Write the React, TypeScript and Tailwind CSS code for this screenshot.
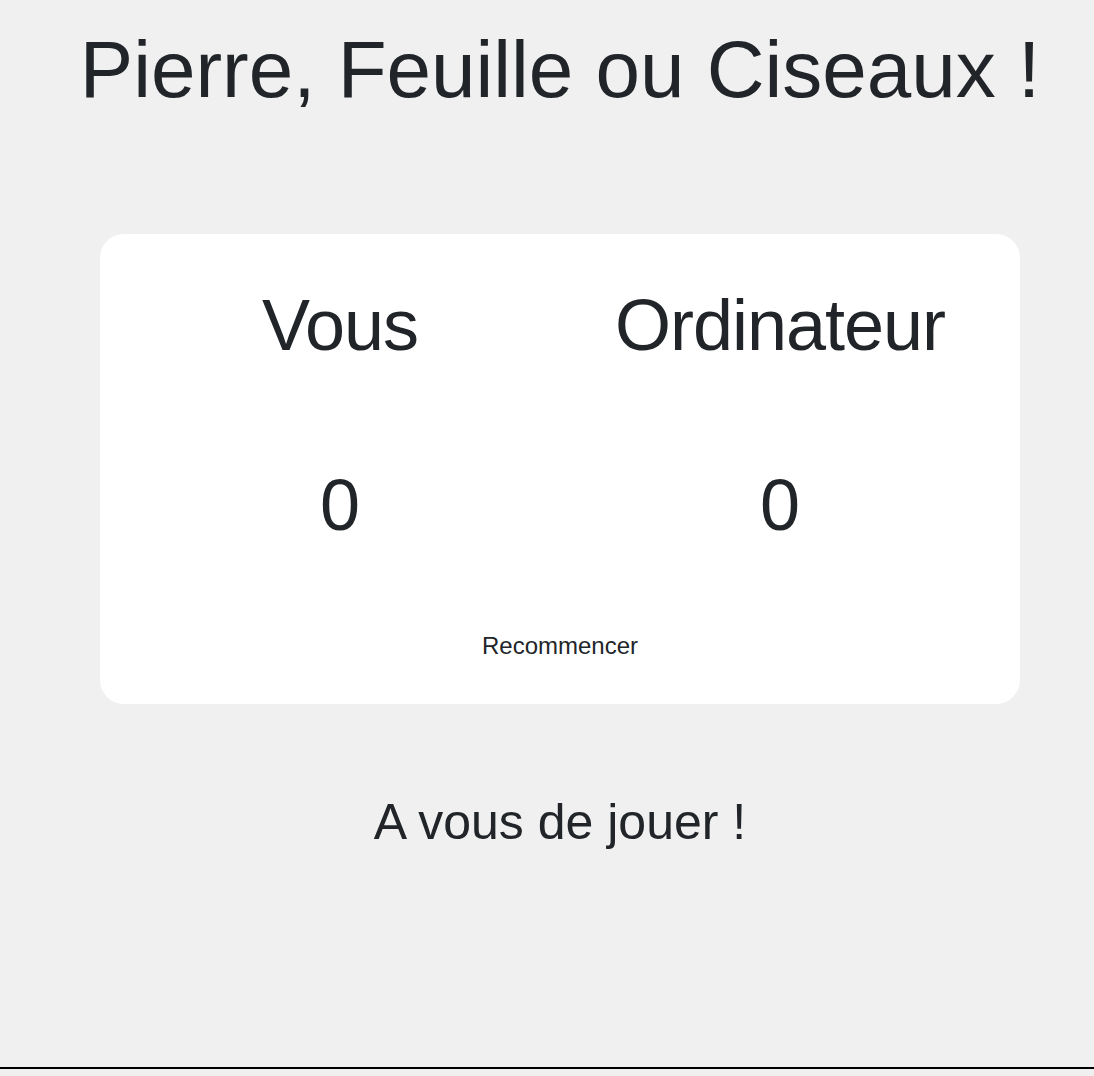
import React from 'react'

const font = { fontFamily: '"Liberation Sans", Arial, Helvetica, sans-serif' }

function Score({ label, value }: { label: string; value: number }) {
  return (
    <div className="flex flex-col items-center">
      <h2 className="text-[72px] leading-none font-normal h-[72px] tracking-[-1px] whitespace-nowrap">{label}</h2>
      <p className="mt-[108px] text-[72px] leading-none h-[72px]">{value}</p>
    </div>
  )
}

export default function App() {
  const [player, setPlayer] = React.useState(0)
  const [computer, setComputer] = React.useState(0)

  const reset = () => {
    setPlayer(0)
    setComputer(0)
  }

  return (
    <div className="min-h-screen h-[1076px] bg-[#f0f0f0] text-[#212529] overflow-hidden" style={font}>
      <div className="w-[920px] ml-[100px] flex flex-col items-center">
        <h1 className="mt-[30px] text-[80px] leading-none h-[80px] font-normal whitespace-nowrap">
          Pierre, Feuille ou Ciseaux !
        </h1>

        <div className="mt-[124px] w-full h-[470px] bg-white rounded-[24px] px-[20px] pt-[55px] flex flex-col">
          <div className="grid grid-cols-2">
            <Score label="Vous" value={player} />
            <Score label="Ordinateur" value={computer} />
          </div>
          <div className="mt-[93px] flex justify-center">
            <button onClick={reset} className="text-[24px] leading-none h-[23px] text-[#212529] bg-transparent">
              Recommencer
            </button>
          </div>
        </div>

        <p className="mt-[93px] text-[50px] leading-none h-[50px] whitespace-nowrap">A vous de jouer !</p>
      </div>
      <div className="mt-[220px] h-[2px] bg-black w-full" />
    </div>
  )
}
